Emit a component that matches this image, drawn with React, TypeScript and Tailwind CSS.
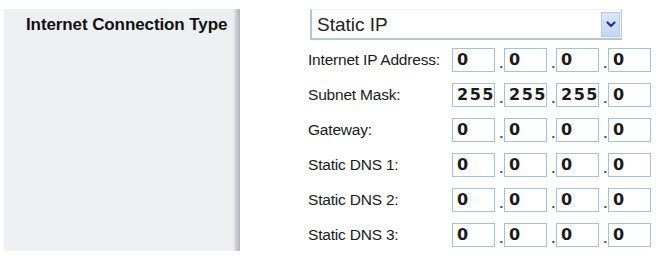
import React from "react";

const rows: { label: string; values: string[] }[] = [
  { label: "Internet IP Address:", values: ["0", "0", "0", "0"] },
  { label: "Subnet Mask:", values: ["255", "255", "255", "0"] },
  { label: "Gateway:", values: ["0", "0", "0", "0"] },
  { label: "Static DNS 1:", values: ["0", "0", "0", "0"] },
  { label: "Static DNS 2:", values: ["0", "0", "0", "0"] },
  { label: "Static DNS 3:", values: ["0", "0", "0", "0"] },
];

function Octet({ value }: { value: string }) {
  return (
    <div className="w-[43px] h-[24px] border-[1.5px] border-[#9fc2dd] bg-white flex items-center pl-[4px] text-[16px] font-bold text-[#1a1a1a] tracking-[1.5px] leading-none [font-family:'DejaVu_Sans',sans-serif]">
      {value}
    </div>
  );
}

export default function App() {
  return (
    <div className="w-[656px] h-[260px] bg-white flex [font-family:'Liberation_Sans',Arial,sans-serif] overflow-hidden">
      <div className="ml-[4px] mt-[9px] w-[236px] h-[242px] bg-[linear-gradient(to_right,#eef1f3_0%,#edf0f2_97%,#c9cdd0_98.5%,#b0b4b8_100%)] pl-[22px] pt-[6px]">
        <div className="text-[17px] font-bold text-[#111] leading-[20px] tracking-[-0.1px]">
          Internet Connection Type
        </div>
      </div>
      <div className="ml-[68px] flex flex-col">
        <div className="mt-[9px] ml-[2px] w-[312px] h-[31px] border-l-2 border-b-2 border-r border-[#b2c6d8] border-t border-t-[#eef2f6] flex items-center justify-between pl-[5px] pr-[1px]">
          <span className="text-[19px] text-[#222] leading-none">Static IP</span>
          <div className="w-[19px] h-[25px] bg-[linear-gradient(to_bottom,#dbe7f8,#c3d6f1)] border border-[#b4c9e6] flex items-center justify-center">
            <svg width="10" height="7" viewBox="0 0 10 7">
              <path d="M1.5 1.5 L5 5 L8.5 1.5" stroke="#1e3a8a" strokeWidth="2.2" fill="none" strokeLinecap="round" strokeLinejoin="round" />
            </svg>
          </div>
        </div>
        <div className="mt-[2px] flex flex-col">
          {rows.map((r) => (
            <div key={r.label} className="h-[35px] flex items-center">
              <div className="w-[144px] text-[15.5px] text-[#1a1a1a] leading-none tracking-[-0.2px]">{r.label}</div>
              <div className="flex items-center">
                {r.values.map((v, i) => (
                  <React.Fragment key={i}>
                    {i > 0 && (
                      <div className="w-[9px] h-[24px] flex items-end justify-end pr-[1px] pb-[2px] text-[13px] font-bold text-[#444] leading-none">.</div>
                    )}
                    <Octet value={v} />
                  </React.Fragment>
                ))}
              </div>
            </div>
          ))}
        </div>
      </div>
    </div>
  );
}
